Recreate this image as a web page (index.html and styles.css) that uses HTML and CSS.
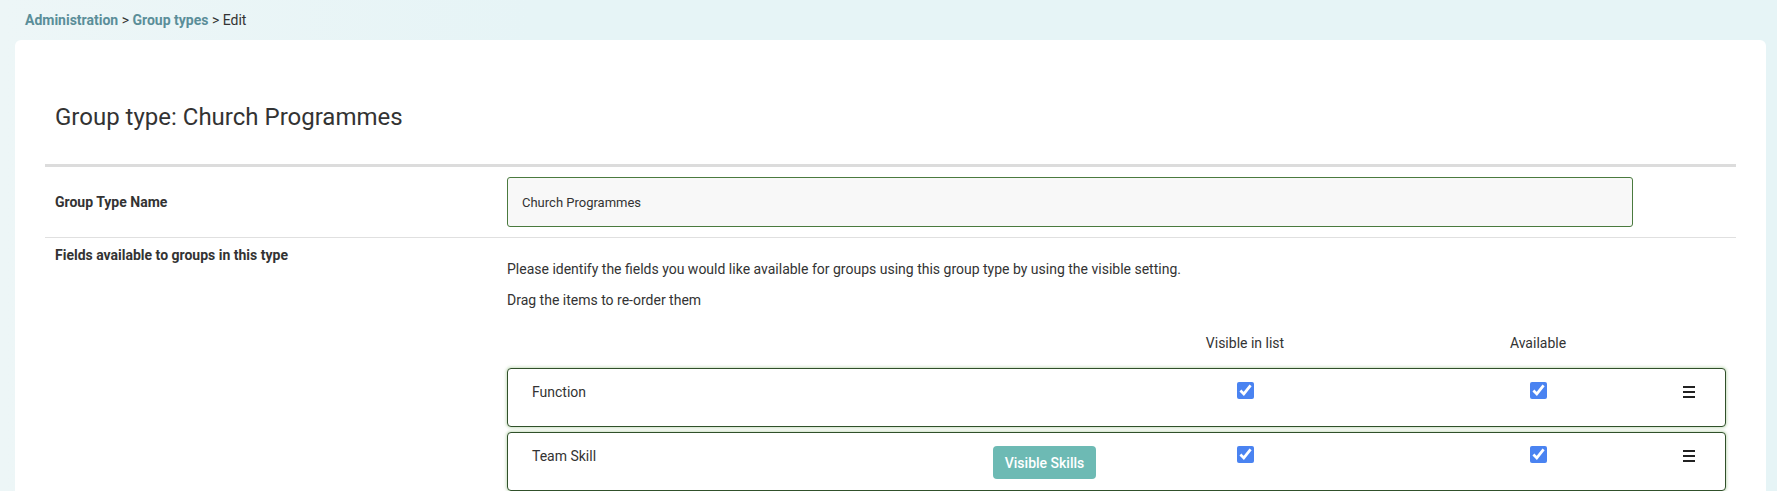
FILE: index.html
```html
<!DOCTYPE html>
<html lang="en">

<head>
    <meta charset="UTF-8">
    <meta name="viewport" content="width=device-width, initial-scale=1.0">
    <title>Group type: Church Programmes</title>
    <link rel="stylesheet" href="styles.css">
</head>

<body>
    <nav class="crumbs">
        <a href="#">Administration</a>&nbsp;&gt;&nbsp;<a href="#">Group types</a>&nbsp;&gt;&nbsp;Edit
    </nav>

    <main class="card">
        <h1>Group type: Church Programmes</h1>

        <div class="form">
            <div class="form-row">
                <label class="form-label middle" for="typeName">Group Type Name</label>
                <div class="form-value boxed">
                    <input type="text" class="text-input" id="typeName" value="Church Programmes">
                </div>
            </div>

            <div class="form-row">
                <div class="form-label">Fields available to groups in this type</div>
                <div class="form-value fields">
                    <p>Please identify the fields you would like available for groups using this group type by using the visible setting.</p>
                    <p>Drag the items to re-order them</p>

                    <div class="field-head">
                        <span class="f-name"></span>
                        <span class="f-extra"></span>
                        <span class="f-vis">Visible in list</span>
                        <span class="f-avail">Available</span>
                        <span class="f-handle"></span>
                    </div>

                    <ul class="field-list">
                        <li class="field-item">
                            <span class="f-name">Function</span>
                            <span class="f-extra"></span>
                            <span class="f-vis"><input type="checkbox" checked></span>
                            <span class="f-avail"><input type="checkbox" checked></span>
                            <span class="f-handle">
                                <svg width="12" height="12" viewBox="0 0 12 12"><rect x="0" y="0" width="12" height="2"/><rect x="0" y="5" width="12" height="2"/><rect x="0" y="10" width="12" height="2"/></svg>
                            </span>
                        </li>
                        <li class="field-item">
                            <span class="f-name">Team Skill</span>
                            <span class="f-extra"><button class="btn-skills">Visible Skills</button></span>
                            <span class="f-vis"><input type="checkbox" checked></span>
                            <span class="f-avail"><input type="checkbox" checked></span>
                            <span class="f-handle">
                                <svg width="12" height="12" viewBox="0 0 12 12"><rect x="0" y="0" width="12" height="2"/><rect x="0" y="5" width="12" height="2"/><rect x="0" y="10" width="12" height="2"/></svg>
                            </span>
                        </li>
                    </ul>
                </div>
            </div>
        </div>
    </main>
</body>

</html>
```

FILE: styles.css
```css
html,
body {
    margin: 0;
    padding: 0;
    overflow: hidden;
}

body {
    background: linear-gradient(90deg, #edf6f7 0%, #e6f4f6 30%, #e6f4f6 100%);
    color: #333;
    font-family: Roboto, 'Liberation Sans', sans-serif;
    font-size: 14px;
}

.crumbs {
    display: flex;
    align-items: center;
    height: 40px;
    padding-left: 25px;
    font-size: 14px;
    color: #333;
}

.crumbs a {
    color: #5a8e99;
    font-weight: 700;
    text-decoration: none;
}

.card {
    margin: 0 11px 0 15px;
    padding: 63px 30px 0;
    background-color: white;
    border-radius: 6px 6px 0 0;
    min-height: 500px;
}

h1 {
    margin: 0 0 33px;
    padding-left: 10px;
    font-size: 24px;
    line-height: 28px;
    font-weight: 400;
    color: #333;
}

.form {
    border-top: 3px solid #dcdcdc;
}

.form-row {
    display: grid;
    grid-template-columns: 462px 1fr;
    border-bottom: 1px solid #e0e0e0;
}

.form-label {
    padding: 8px 0 0 10px;
    font-weight: 700;
    line-height: 18px;
}

.form-label.middle {
    align-self: center;
    padding-top: 0;
}

.form-value.boxed {
    padding: 10px 0;
}

.text-input {
    display: block;
    box-sizing: border-box;
    width: calc(100% - 103px);
    height: 50px;
    margin: 0;
    padding: 0 14px;
    background-color: #f8f8f8;
    border: solid 1px #4a7a3e;
    border-radius: 3px;
    color: #333;
    font-family: Roboto, 'Liberation Sans', sans-serif;
    font-size: 13px;
}

.fields {
    padding-top: 21px;
}

.fields p {
    margin: 0 0 11px;
    line-height: 20px;
}

.field-head,
.field-item {
    display: flex;
    box-sizing: border-box;
    width: calc(100% - 10px);
    line-height: 20px;
}

.field-head {
    margin: 22px 0 14px;
    border: solid 1px transparent;
}

.f-name {
    flex: 0 0 436px;
    box-sizing: border-box;
    padding-left: 24px;
}

.f-extra {
    flex: 0 0 201px;
    text-align: center;
}

.f-vis {
    flex: 0 0 200px;
    text-align: center;
}

.f-avail {
    flex: 1;
    padding-left: 78px;
    text-align: center;
}

.f-handle {
    flex: 0 0 72px;
    text-align: center;
}

.f-handle svg {
    display: inline-block;
    vertical-align: middle;
    fill: #222;
    margin-top: -3px;
}

.field-list {
    margin: 0;
    padding: 0;
    list-style: none;
}

.field-item {
    min-height: 59px;
    margin-bottom: 5px;
    padding-top: 13px;
    align-items: flex-start;
    background-color: white;
    border: solid 1px #30502a;
    border-radius: 4px;
    box-shadow: 0 0 3px 1px rgba(120, 175, 100, 0.4);
}

.field-item input[type="checkbox"] {
    width: 17px;
    height: 17px;
    margin: 0;
    vertical-align: top;
    accent-color: #4a83f1;
}

.btn-skills {
    height: 33px;
    padding: 0 12px;
    background-color: #6dbab4;
    border: none;
    border-radius: 4px;
    color: white;
    font-family: Roboto, 'Liberation Sans', sans-serif;
    font-size: 14px;
    font-weight: 500;
}
```
